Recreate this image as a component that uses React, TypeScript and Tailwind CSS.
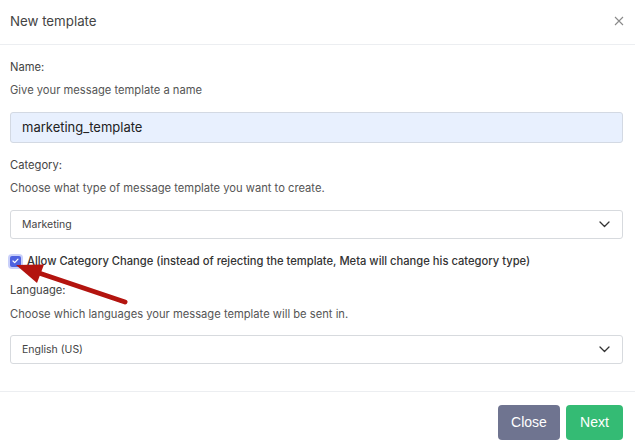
import React from "react";

const font = { fontFamily: "Inter, 'Noto Sans', sans-serif" };

function Chevron() {
  return (
    <svg width="11" height="7" viewBox="0 0 11 7" fill="none" className="shrink-0">
      <path d="M1 1l4.5 4.5L10 1" stroke="#333" strokeWidth="1.3" strokeLinecap="round" strokeLinejoin="round" />
    </svg>
  );
}

function SelectBox({ value }: { value: string }) {
  return (
    <div className="flex h-[29px] items-center justify-between rounded-[3px] border border-[#d7dade] bg-white pl-[11px] pr-[12px]">
      <span className="text-[10.5px] text-[#444]">{value}</span>
      <Chevron />
    </div>
  );
}

export default function App() {
  return (
    <div className="relative h-[445px] w-[635px] overflow-hidden bg-white text-[#444]" style={font}>
      {/* header */}
      <div className="flex h-[45px] items-center justify-between border-b border-[#eceef1] pl-[10px] pr-[11px]">
        <h1 className="text-[13.3px] text-[#444]">New template</h1>
        <svg width="10" height="10" viewBox="0 0 10 10" className="mb-[2px]">
          <path d="M1 1l8 8M9 1l-8 8" stroke="#8a8a8a" strokeWidth="1.1" />
        </svg>
      </div>

      {/* body */}
      <div className="px-[10px] pb-[27px] pr-[12px]">
        <p className="mt-[14px] text-[11.2px] leading-[16px] text-[#444]">Name:</p>
        <p className="mt-[7px] text-[11.2px] leading-[16px] text-[#555]">Give your message template a name</p>
        <div className="mt-[14px] flex h-[31px] items-center rounded-[3px] border border-[#d3d9e3] bg-[#e8f0fe] px-[11px]">
          <span className="text-[13px] text-[#222]">marketing_template</span>
        </div>

        <p className="mt-[14px] text-[11.2px] leading-[16px] text-[#444]">Category:</p>
        <p className="mt-[7px] text-[11.2px] leading-[16px] text-[#555]">Choose what type of message template you want to create.</p>
        <div className="mt-[14px]">
          <SelectBox value="Marketing" />
        </div>

        <label className="mt-[14px] flex h-[16px] items-center gap-[6px]">
          <span className="flex h-[11px] w-[11px] items-center justify-center rounded-[2px] bg-[#4f63e0] ring-2 ring-[#c9d0fa]">
            <svg width="7" height="6" viewBox="0 0 7 6">
              <path d="M1 3l1.7 1.7L6 1.2" stroke="#fff" strokeWidth="1.2" fill="none" strokeLinecap="round" strokeLinejoin="round" />
            </svg>
          </span>
          <span className="text-[11.2px] font-medium text-[#333]">
            Allow Category Change (instead of rejecting the template, Meta will change his category type)
          </span>
        </label>

        <p className="mt-[13px] text-[11.2px] leading-[16px] text-[#444]">Language:</p>
        <p className="mt-[8px] text-[11.2px] leading-[16px] text-[#555]">Choose which languages your message template will be sent in.</p>
        <div className="mt-[13px]">
          <SelectBox value="English (US)" />
        </div>
      </div>

      {/* footer */}
      <div className="flex justify-end gap-[6px] border-t border-[#eceef1] pr-[12px] pt-[13px]" style={{ fontFamily: "'Liberation Sans', Arial, sans-serif" }}>
        <button type="button" className="h-[35px] w-[62px] rounded-[4px] bg-[#6f7490] text-[14px] text-white">
          Close
        </button>
        <button type="button" className="h-[35px] w-[57px] rounded-[4px] bg-[#34bb74] text-[14px] text-white">
          Next
        </button>
      </div>

      {/* annotation arrow */}
      <svg className="pointer-events-none absolute left-0 top-0" width="635" height="445">
        <line x1="125" y1="302" x2="36" y2="272" stroke="#b3140f" strokeWidth="5" strokeLinecap="round" />
        <polygon points="16,265 44,264.5 37,283" fill="#b3140f" />
      </svg>
    </div>
  );
}
